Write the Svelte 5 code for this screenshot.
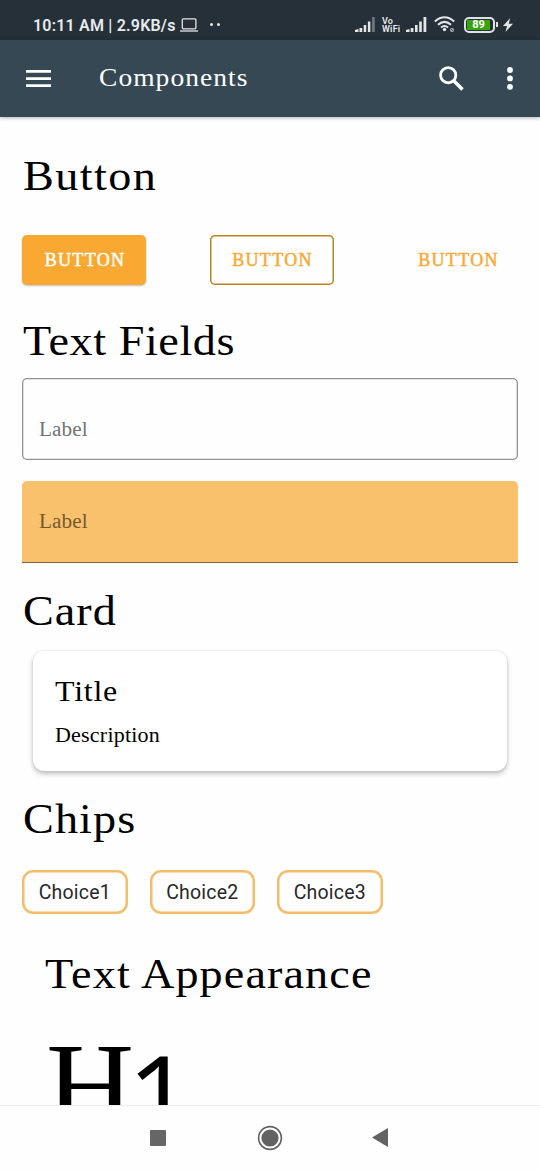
<script>
  const chips = ['Choice1', 'Choice2', 'Choice3'];
</script>

<div class="screen">
  <div class="status">
    <span class="clock">10:11 AM | 2.9KB/s</span>
    <svg class="laptop" width="18" height="14" viewBox="0 0 18 14" fill="none" stroke="#e3e6e8" stroke-width="1.3">
      <rect x="2.3" y="0.8" width="13.6" height="10" rx="1" /><path d="M0 13h18" />
    </svg>
    <i class="dot"></i><i class="dot"></i>
    <div class="indicators">
      <svg width="20" height="15" viewBox="0 0 20 15" fill="#e3e6e8">
        <path d="M0 13L3.5 12v3H0zM4.5 11h2.7v4H4.5zM8.7 8h2.5v7H8.7zM12.9 4.5h2.5V15h-2.5z" /><path d="M17 0h2.8v15H17z" opacity=".38" />
      </svg>
      <span class="vowifi"><span>Vo</span><span>WiFi</span></span>
      <svg width="21" height="15" viewBox="0 0 21 15" fill="#e3e6e8">
        <path d="M0 13L3.5 12v3H0zM4.7 11h2.7v4H4.7zM9 8h2.6v7H9zM13.2 4.5h2.6V15h-2.6zM17.5 0h2.8v15h-2.8z" />
      </svg>
      <svg class="wifi" width="22" height="17" viewBox="0 0 22 17" fill="none" stroke="#e3e6e8" stroke-width="2">
        <path d="M.8 5.4Q10.5-3 20.2 5.4M4 8.8Q10.5 3 17 8.8M7 11.6Q10.5 8.4 14 11.6" />
        <circle cx="10.5" cy="13.5" r="1.7" fill="#e3e6e8" stroke="none" />
        <circle cx="18" cy="14" r="1.5" stroke-width="1.2" opacity=".7" /><path d="M17 15l2-2" stroke-width=".8" opacity=".7" />
      </svg>
      <span class="battery"><span>89</span></span><i class="cap"></i>
      <svg class="bolt" width="10" height="14" viewBox="0 0 10 14" fill="#e3e6e8"><path d="M7.2 0L0 8h4L2.5 14 10 5.7H5.7z" /></svg>
    </div>
  </div>

  <header>
    <svg width="25" height="17" viewBox="0 0 25 17" fill="#fff"><path d="M0 0h25v2.7H0zM0 7.2h25v2.7H0zM0 14.3h25V17H0z" /></svg>
    <h1>Components</h1>
    <svg class="search" width="25" height="25" viewBox="0 0 25 25" fill="none" stroke="#fff">
      <circle cx="9.2" cy="9.2" r="7.6" stroke-width="2.8" /><path d="M15 15l8.5 8.5" stroke-width="3.5" />
    </svg>
    <svg width="6" height="23" viewBox="0 0 6 23" fill="#fff"><circle cx="3" cy="3" r="2.9" /><circle cx="3" cy="11.4" r="2.9" /><circle cx="3" cy="19.8" r="2.9" /></svg>
  </header>

  <main>
    <h2 class="t-button">Button</h2>
    <div class="buttons">
      <button class="filled">BUTTON</button>
      <button class="outlined">BUTTON</button>
      <button class="plain">BUTTON</button>
    </div>
    <h2 class="t-fields">Text Fields</h2>
    <div class="field outline"><span>Label</span></div>
    <div class="field solid"><span>Label</span></div>
    <h2 class="t-card">Card</h2>
    <div class="card">
      <h3>Title</h3>
      <p>Description</p>
    </div>
    <h2 class="t-chips">Chips</h2>
    <div class="chips">
      {#each chips as chip}<span class="chip">{chip}</span>{/each}
    </div>
    <h2 class="t-appearance">Text Appearance</h2>
    <div class="display"><span class="letter">H</span><span class="digit">1</span></div>
  </main>

  <nav>
    <svg width="16" height="16"><rect width="16" height="16" rx="1" fill="#666" /></svg>
    <svg width="26" height="26" viewBox="0 0 26 26"><circle cx="13" cy="13" r="11.4" fill="none" stroke="#626262" stroke-width="1.6" /><circle cx="13" cy="13" r="8.6" fill="#626262" /></svg>
    <svg width="16" height="19" viewBox="0 0 16 19"><path d="M0 9.5L16 0v19z" fill="#626262" /></svg>
  </nav>
</div>

<style>
  :global(body) { margin: 0; background: #fff; }
  .screen {
    width: 540px; height: 1170px; overflow: hidden; display: flex; flex-direction: column;
    background: #fefefe; font-family: "Liberation Serif", serif; color: #000;
  }
  .status {
    height: 40px; flex: none; box-sizing: border-box; padding: 9px 27px 0 33px; display: flex; align-items: center;
    background: #263038; color: #e8ebed; font-family: Roboto, sans-serif;
  }
  .clock { font-size: 16px; font-weight: 600; white-space: pre; width: 147px; letter-spacing: .2px; padding-top: 1px; }
  .laptop { margin-right: 12px; }
  .dot { width: 3px; height: 3px; border-radius: 50%; background: #e3e6e8; margin-right: 4px; }
  .indicators { margin-left: auto; display: flex; align-items: center; }
  .vowifi { display: flex; flex-direction: column; font: 600 9px/8px Roboto, sans-serif; width: 18px; margin: 0 6px 0 7px; letter-spacing: .2px; }
  .wifi { margin: 0 8px 0 7px; }
  .battery {
    box-sizing: border-box; width: 31px; height: 16px; border: 2px solid #dde2e2; border-radius: 5px; padding: 1px;
    display: flex;
  }
  .battery span { width: 23px; background: #38a30b; font: 700 11px/10px Roboto, sans-serif; color: #fff; text-align: center; }
  .cap { width: 2px; height: 5px; background: #dde2e2; margin: 0 5px 0 1px; }
  header {
    position: relative; height: 77px; flex: none; box-sizing: border-box; padding: 0 28px 0 26px; display: flex; align-items: center;
    background: #354854; box-shadow: 0 1px 4px rgba(0, 0, 0, .3);
  }
  header h1, h2, h3, p { transform: scaleX(1.1); transform-origin: 0 0; }
  header h1 { margin: -2px auto 0 48px; font-size: 25px; line-height: 30px; font-weight: 400; color: #fff; letter-spacing: .95px; }
  .search { margin-right: 43px; }
  header svg:last-child { margin-right: -1px; }
  main { flex: 1; min-height: 0; overflow: hidden; padding: 34px 22px 0; }
  h2 { width: max-content; margin: 0; font-size: 42px; line-height: 50px; font-weight: 400; white-space: nowrap; }
  .t-button { letter-spacing: 1.3px; margin: 0 0 34px 1px; }
  .t-fields { letter-spacing: .5px; margin: 31px 0 12px 1px; }
  .t-card { letter-spacing: .9px; margin: 23px 0 15px 1px; }
  .t-chips { letter-spacing: 1px; margin: 23px 0 26px 1px; }
  .t-appearance { letter-spacing: 1px; margin: 35px 0 0 23px; }
  .buttons { display: flex; justify-content: space-between; }
  button {
    box-sizing: border-box; width: 124px; height: 50px; border: 0; border-radius: 5px; padding: 0 0 0 2px; background: none;
    font: 400 18px "Liberation Serif", serif; letter-spacing: 1.3px; color: #f9a932; -webkit-text-stroke: .45px currentColor;
  }
  .filled { background: #f9a932; color: #fff; box-shadow: 0 1px 2px rgba(0, 0, 0, .25); }
  .outlined { box-shadow: inset 0 0 0 1.5px #b98320; }
  .plain { width: 121px; }
  .field { box-sizing: border-box; height: 82px; display: flex; padding-left: 17px; font-size: 20px; line-height: 24px; letter-spacing: .1px; }
  .field span { transform: scaleX(1.06); transform-origin: 0 0; }
  .outline { box-shadow: inset 0 0 0 1.3px #929292; border-radius: 5px; padding: 39px 0 0 17px; color: #737373; }
  .solid { margin-top: 21px; background: #f9c16c; border-bottom: 1px solid #80643a; border-radius: 5px 5px 0 0; padding-top: 28px; color: #735932; }
  .card {
    box-sizing: border-box; height: 120px; margin: 0 11px; padding: 23px 22px; border-radius: 11px; background: #fff;
    box-shadow: 0 3px 5px rgba(0, 0, 0, .24), 0 0 3px rgba(0, 0, 0, .1);
  }
  h3 { width: max-content; margin: 0; font-size: 29px; line-height: 34px; font-weight: 400; letter-spacing: .7px; }
  p { width: max-content; margin: 15px 0 0; font-size: 20px; line-height: 24px; letter-spacing: .2px; }
  .chips { display: flex; gap: 22px; }
  .chip {
    box-sizing: border-box; width: 105.5px; height: 44px; box-shadow: inset 0 0 0 2.5px #f3bd6b; border-radius: 11px; text-align: center;
    font: 400 19.5px/45px Roboto, sans-serif; color: #282828; letter-spacing: .2px;
  }
  .display { margin: 23px 0 0 24px; height: 83px; display: flex; }
  .letter { font-size: 122px; line-height: 130px; }
  .digit { font: 116px/130px "Open Sans", sans-serif; margin: 7px 0 0 -7px; }
  nav {
    position: relative; height: 65px; flex: none; box-sizing: border-box; border-top: 1px solid #ececec; padding-left: 150px;
    display: flex; align-items: center; background: #fefefe;
  }
  nav svg { margin-top: -1px; }
  nav svg + svg { margin-left: 91px; }
  nav svg:last-child { margin-left: 89px; }
</style>
